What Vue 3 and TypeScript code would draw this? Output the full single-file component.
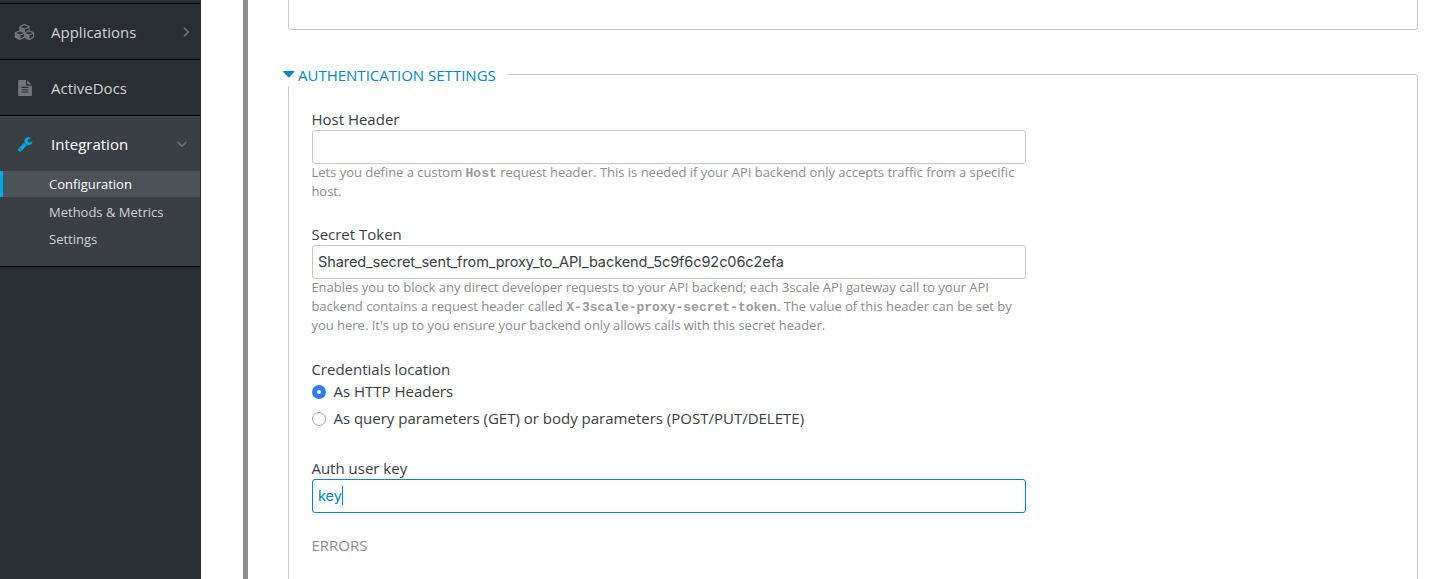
<script setup lang="ts">
import { ref } from 'vue'

const token = ref('Shared_secret_sent_from_proxy_to_API_backend_5c9f6c92c06c2efa')
const userKey = ref('key')
const location = ref('headers')
const locations = [
  { id: 'headers', label: 'As HTTP Headers' },
  { id: 'query', label: 'As query parameters (GET) or body parameters (POST/PUT/DELETE)' },
]
const links = ['Configuration', 'Methods & Metrics', 'Settings']
const current = ref('Configuration')
</script>

<template>
  <div class="page">
    <aside class="sidebar">
      <nav>
        <a class="item">
          <svg class="icon cubes" viewBox="0 0 2304 1792"><path d="M640 1632l384-192v-314l-384 164v342zm-64-454l404-173-404-173-404 173zm1088 454l384-192v-314l-384 164v342zm-64-454l404-173-404-173-404 173zm-448-293l384-165v-266l-384 164v267zm-64-379l441-189-441-189-441 189zm1088 518v416q0 36-19 67t-52 47l-448 224q-25 14-57 14t-57-14l-448-224q-4-2-7-4-2 2-7 4l-448 224q-25 14-57 14t-57-14l-448-224q-33-16-52-47t-19-67v-416q0-38 21.5-70t56.5-48l434-186v-400q0-38 21.5-70t56.5-48l448-192q23-10 50-10t50 10l448 192q35 16 56.5 48t21.5 70v400l434 186q36 16 57 48t21 70z" /></svg>
          <span class="name">Applications</span>
          <svg class="chevron" viewBox="0 0 12 12"><path d="M4 1.8 8.2 6 4 10.2" /></svg>
        </a>
        <a class="item">
          <svg class="icon doc" viewBox="0 0 1792 1792"><path d="M1596 476q14 14 28 36h-472v-472q22 14 36 28zm-476 164h544v1056q0 40-28 68t-68 28h-1344q-40 0-68-28t-28-68v-1600q0-40 28-68t68-28h800v544q0 40 28 68t68 28zm160 736v-64q0-14-9-23t-23-9h-704q-14 0-23 9t-9 23v64q0 14 9 23t23 9h704q14 0 23-9t9-23zm0-256v-64q0-14-9-23t-23-9h-704q-14 0-23 9t-9 23v64q0 14 9 23t23 9h704q14 0 23-9t9-23zm0-256v-64q0-14-9-23t-23-9h-704q-14 0-23 9t-9 23v64q0 14 9 23t23 9h704q14 0 23-9t9-23z" /></svg>
          <span class="name">ActiveDocs</span>
        </a>
        <div class="group">
          <a class="item open">
            <svg class="icon wrench" viewBox="0 0 1792 1792"><path d="M448 1472q0-26-19-45t-45-19-45 19-19 45 19 45 45 19 45-19 19-45zm644-420l-682 682q-37 37-90 37-52 0-91-37l-106-108q-38-36-38-90 0-53 38-91l681-681q39 98 114.5 173.5t173.5 114.5zm634-435q0 39-23 106-47 134-164.5 217.5t-258.5 83.5q-185 0-316.5-131.5t-131.5-316.5 131.5-316.5 316.5-131.5q58 0 121.5 16.5t107.5 46.5q16 11 16 28t-16 28l-293 169v224l193 107q5-3 79-48.5t135.5-81 70.5-35.5q15 0 23.5 10t8.5 25z" /></svg>
            <span class="name">Integration</span>
            <svg class="chevron down" viewBox="0 0 12 12"><path d="M1.8 4 6 8.2 10.2 4" /></svg>
          </a>
          <a v-for="l in links" :key="l" class="sub" :class="{ current: l === current }"><span>{{ l }}</span></a>
        </div>
      </nav>
    </aside>
    <div class="rule"></div>
    <main class="content">
      <section class="previous"></section>
      <section class="settings">
        <header class="legend">
          <svg class="caret" viewBox="0 0 12 7"><path d="M0.6 0h10.2q.8.3.3.9L6.5 6.1q-.7.6-1.4 0L.3.9Q-.2.3.6 0z" /></svg>
          <span>AUTHENTICATION SETTINGS</span>
        </header>
        <div class="field host">
          <label>Host Header</label>
          <div class="input"></div>
          <p class="hint">Lets you define a custom <code>Host</code> request header. This is needed if your API backend only accepts traffic from a specific<br>host.</p>
        </div>
        <div class="field token">
          <label>Secret Token</label>
          <div class="input"><span>{{ token }}</span></div>
          <p class="hint">Enables you to block any direct developer requests to your API backend; each 3scale API gateway call to your API<br>backend contains a request header called <code>X-3scale-proxy-secret-token</code>. The value of this header can be set by<br>you here. It's up to you ensure your backend only allows calls with this secret header.</p>
        </div>
        <div class="field creds">
          <label>Credentials location</label>
          <div v-for="o in locations" :key="o.id" class="option" @click="location = o.id">
            <i class="radio" :class="{ on: location === o.id }"></i><span>{{ o.label }}</span>
          </div>
        </div>
        <div class="field auth">
          <label>Auth user key</label>
          <div class="input focus"><span>{{ userKey }}</span><i class="cursor"></i></div>
        </div>
        <h4 class="errors">ERRORS</h4>
      </section>
    </main>
  </div>
</template>

<style>
html, body { margin: 0; overflow: hidden; background: #fff; }
</style>

<style scoped>
* { box-sizing: border-box; }
.page {
  display: flex;
  height: 579px;
  overflow: hidden;
  font-family: "Open Sans", "Noto Sans", sans-serif;
  font-size: 15px;
  color: #394045;
}
.sidebar { width: 201px; padding: 3px 1px 0 0; background: #292e34; flex: none; }
.item {
  display: flex;
  align-items: center;
  height: 56px;
  padding: 0 8px 0 14px;
  border-top: 1px solid #030303;
  color: #d1d1d1;
}
.icon { width: 22px; height: 16px; fill: #72767b; flex: none; }
.name { margin-left: 15px; flex: 1; }
.chevron { width: 12px; height: 12px; fill: none; stroke: #72767b; stroke-width: 1.5; }
.group { height: 152px; background: #393f44; border-bottom: 1px solid #030303; }
.open { color: #fff; font-weight: 500; }
.wrench { fill: #00a8e1; height: 16px; }
.down { margin-right: 4px; }
.sub { display: block; height: 27px; padding-left: 49px; font-size: 13px; line-height: 27px; color: #d1d1d1; }
.sub.current { height: 26px; margin-bottom: 2px; padding-left: 46px; border-left: 3px solid #00a8e1; background: #4d5258; color: #fff; font-weight: 500; line-height: 26px; }
.rule { width: 5px; margin-left: 42px; background: #8f8f8f; flex: none; }
.content { flex: 1; padding: 0 22px 0 40px; }
.previous { height: 30px; border: 1px solid #ccc; border-top: 0; border-radius: 0 0 3px 3px; }
.settings { height: 540px; margin-top: 44px; padding-left: 23px; border: 1px solid #ccc; border-radius: 3px; }
.legend { display: flex; width: 225px; height: 24px; margin: -13px 0 0 -30px; line-height: 26px; background: #fff; color: #0088ce; white-space: nowrap; }
.caret { width: 12px; height: 7px; margin: 9px 3px 0 1px; fill: #0088ce; flex: none; }
.field { width: 715px; }
.host { height: 115px; margin-top: 24px; }
.token { height: 135px; }
.creds { height: 99px; }
.auth { height: 68px; }
label { display: block; height: 20px; margin-left: -0.6px; line-height: 19px; }
.input { width: 714px; height: 34px; padding: 0 0 0 5px; border: 1px solid #c8c8c8; border-radius: 3px; font-family: Inter, "Liberation Sans", sans-serif; font-size: 14.5px; letter-spacing: -0.08px; line-height: 30px; display: flex; align-items: center; white-space: nowrap; }
.input span { margin-top: -1px; }
.focus { border-color: #0088ce; color: #0088ce; }
.cursor { width: 1px; height: 19px; margin-top: -2px; background: #0088ce; }
.hint { margin: -1px 0 0 -0.6px; color: #8b8d8f; font-size: 13px; letter-spacing: -0.01px; line-height: 19px; white-space: nowrap; }
code { font-family: "Liberation Mono", monospace; font-size: 13px; font-weight: 700; letter-spacing: 0; line-height: 1; color: #999b9d; }
.option { display: flex; align-items: center; height: 27px; margin-top: -2px; }
.option + .option { margin-top: 0; }
.option span { margin: -1px 0 0 -0.6px; }
.radio { width: 14px; height: 14px; margin-right: 8px; border: 1px solid #aaa; border-radius: 50%; background: #fff; }
.radio.on { border: 5px solid #3478f6; }
.errors { margin: 0 0 0 -0.6px; font-size: 15px; font-weight: 400; line-height: 36px; color: #8b8d8f; }
</style>
